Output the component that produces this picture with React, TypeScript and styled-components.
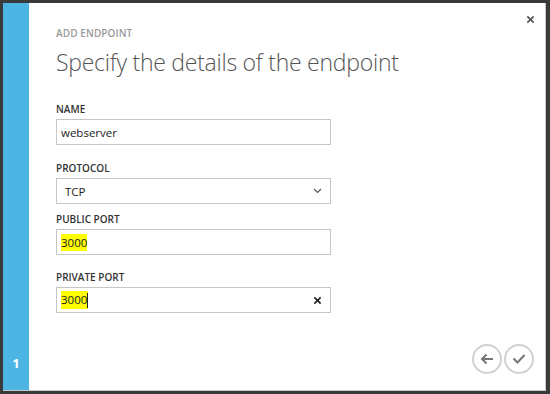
import React from 'react';
import styled, { createGlobalStyle } from 'styled-components';

const GlobalStyle = createGlobalStyle`
    html, body {
        margin: 0;
        padding: 0;
        background: #3a3a3a;
    }
    body {
        font-family: "Open Sans", "Noto Sans", sans-serif;
    }
`

const Page = styled.div`
    width: 550px;
    height: 394px;
    padding: 3px 0 0 3px;
    box-sizing: border-box;
    background: #3a3a3a;
    overflow: hidden;
`

const Dialog = styled.div`
    display: flex;
    width: 543px;
    height: 388px;
    background: #fff;
    border-right: 1px solid #c8c8c8;
    border-bottom: 1px solid #c8c8c8;
    box-sizing: border-box;
    position: relative;
`

const StepBar = styled.div`
    width: 26px;
    background: #4cb5e3;
    display: flex;
    flex-direction: column;
    justify-content: flex-end;
    align-items: center;
    padding-bottom: 18px;
    color: #fff;
    font-size: 13px;
    font-weight: 700;
`

const Main = styled.div`
    flex: 1;
    display: flex;
    flex-direction: column;
    padding: 23px 0 0 27px;
`

const Kicker = styled.div`
    font-size: 10px;
    font-weight: 600;
    color: #9a9a9a;
    letter-spacing: 0.1px;
    line-height: 14px;
`

const Title = styled.h1`
    margin: 7px 0 0 0;
    font-size: 23px;
    font-weight: 300;
    letter-spacing: -0.25px;
    color: #555;
    line-height: 30px;
`

const Form = styled.div`
    margin-top: 25px;
    display: flex;
    flex-direction: column;
`

const Field = styled.div<{ $gap: number }>`
    display: flex;
    flex-direction: column;
    margin-bottom: ${p => p.$gap}px;
`

const Label = styled.label`
    font-size: 10px;
    font-weight: 600;
    color: #333;
    line-height: 14px;
    margin-bottom: 3px;
`

const Box = styled.div`
    width: 275px;
    height: 26px;
    box-sizing: border-box;
    border: 1px solid #c6c6c6;
    display: flex;
    align-items: center;
    justify-content: space-between;
    padding: 0 8px 0 4px;
    font-size: 11.5px;
    color: #222;
`

const Value = styled.span<{ $marked?: boolean; $indent?: number }>`
    background: ${p => (p.$marked ? '#ffff00' : 'transparent')};
    padding: 1px 0 1px ${p => p.$indent ?? 0}px;
    line-height: 15px;
`

const Caret = styled.span`
    display: inline-block;
    width: 1px;
    height: 15px;
    background: #222;
    vertical-align: middle;
`

const CloseButton = styled.button`
    position: absolute;
    top: 12px;
    right: 10px;
    border: none;
    background: none;
    padding: 0;
    color: #555;
    cursor: pointer;
    line-height: 0;
`

const Footer = styled.div`
    margin-top: auto;
    display: flex;
    justify-content: flex-end;
    gap: 2px;
    padding: 0 11px 16px 0;
`

const RoundButton = styled.button`
    width: 30px;
    height: 30px;
    border-radius: 50%;
    border: 2px solid #d0d0d0;
    background: #fff;
    display: flex;
    align-items: center;
    justify-content: center;
    padding: 0;
    color: #777;
    cursor: pointer;
`

const Clear = styled.span`
    color: #222;
    line-height: 0;
`

const Cross = ({ size = 9 }: { size?: number }) => (
    <svg width={size} height={size} viewBox="0 0 10 10">
        <path d="M1.5 1.5 L8.5 8.5 M8.5 1.5 L1.5 8.5" stroke="currentColor" strokeWidth="1.8" />
    </svg>
)

const Chevron = () => (
    <svg width="9" height="6" viewBox="0 0 9 6">
        <path d="M1 1 L4.5 4.5 L8 1" stroke="#555" strokeWidth="1.2" fill="none" />
    </svg>
)

function App() {
    return (
        <Page>
            <GlobalStyle />
            <Dialog>
                <StepBar>1</StepBar>
                <Main>
                    <Kicker>ADD ENDPOINT</Kicker>
                    <Title>Specify the details of the endpoint</Title>
                    <Form>
                        <Field $gap={16}>
                            <Label>NAME</Label>
                            <Box><Value>webserver</Value></Box>
                        </Field>
                        <Field $gap={8}>
                            <Label>PROTOCOL</Label>
                            <Box><Value $indent={4}>TCP</Value><Chevron /></Box>
                        </Field>
                        <Field $gap={15}>
                            <Label>PUBLIC PORT</Label>
                            <Box><Value $marked>3000</Value></Box>
                        </Field>
                        <Field $gap={0}>
                            <Label>PRIVATE PORT</Label>
                            <Box>
                                <Value $marked>3000<Caret /></Value>
                                <Clear><Cross size={9} /></Clear>
                            </Box>
                        </Field>
                    </Form>
                    <Footer>
                        <RoundButton type="button" title="Back">
                            <svg width="14" height="12" viewBox="0 0 14 12">
                                <path d="M13 6 H2 M6.5 1.5 L2 6 L6.5 10.5" stroke="currentColor" strokeWidth="2" fill="none" />
                            </svg>
                        </RoundButton>
                        <RoundButton type="button" title="Complete">
                            <svg width="14" height="12" viewBox="0 0 14 12">
                                <path d="M1.5 5.5 L5.5 9.5 L12.5 2" stroke="currentColor" strokeWidth="2" fill="none" />
                            </svg>
                        </RoundButton>
                    </Footer>
                </Main>
                <CloseButton type="button" title="Close"><Cross size={9} /></CloseButton>
            </Dialog>
        </Page>
    );
}

export default App;
